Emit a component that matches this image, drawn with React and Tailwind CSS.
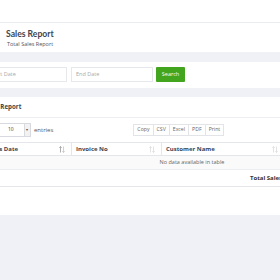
import React from 'react';

const exportButtons = ["Copy", "CSV", "Excel", "PDF", "Print"];

function SortIcon({ active }) {
  return (
    <svg width="6" height="7" viewBox="0 0 6 7" className="shrink-0">
      <path d="M1.5 6.5V0.5M0.3 1.8L1.5 0.5L2.7 1.8" stroke={active ? "#999" : "#dcdcdc"} strokeWidth="0.8" fill="none" />
      <path d="M4.5 0.5V6.5M3.3 5.2L4.5 6.5L5.7 5.2" stroke={active ? "#c4c4c4" : "#dcdcdc"} strokeWidth="0.8" fill="none" />
    </svg>
  );
}

export default function App() {
  return (
    <div className="w-[280px] h-[280px] overflow-hidden bg-[#f0f1f6] font-['Open_Sans',sans-serif] text-[#555]">
      {/* top bar */}
      <div className="h-[23px] bg-white border-b border-[#eaecf1]" />

      {/* page title */}
      <div className="h-[29px] bg-white pl-[6px] pt-[6px]">
        <h1 className="font-['Lato',sans-serif] font-bold text-[8.6px] leading-[11px] text-[#3d4450]">Sales Report</h1>
        <p className="pl-[1px] text-[5.5px] leading-[9px] text-[#555]">Total Sales Report</p>
      </div>

      {/* filters */}
      <div className="mt-[10px] h-[26px] bg-white">
        <div className="flex items-start pt-[5px] ml-[-14px] gap-[4px]">
          <div className="w-[81px] h-[15px] border border-[#e6e8ec] bg-white flex items-center pl-[3px] text-[5.5px] text-[#aaa]">Start Date</div>
          <div className="w-[82px] h-[15px] border border-[#e6e8ec] bg-white flex items-center pl-[4px] text-[5.5px] text-[#aaa]">End Date</div>
          <div className="ml-[-1px] w-[29px] h-[15px] bg-[#43a41e] rounded-[1px] flex items-center justify-center text-[5.5px] text-white">Search</div>
        </div>
      </div>

      {/* report card */}
      <div className="mt-[9px] bg-white h-[118px]">
        <div className="h-[21px] border-b border-[#eceef2] flex items-center ml-[-17px]">
          <span className="font-bold text-[6.2px] text-[#444]">Sales Report</span>
        </div>

        <div className="pt-[5px]">
          <div className="flex items-center h-[14px] ml-[-17px]">
            <span className="text-[5.5px] text-[#555] mr-[2px]">Show</span>
            <div className="w-[32px] h-[14px] border border-[#d8dadf] flex items-center text-[5px] text-[#444]">
              <span className="ml-[8px]">10</span>
              <span className="ml-auto w-[6px] h-full border-l border-[#d8dadf] bg-[#f2f2f2] flex items-center justify-center text-[4px] text-[#555]">▾</span>
            </div>
            <span className="ml-[3px] text-[6px] text-[#555]">entries</span>
            <div className="ml-[80px] flex h-[12px]">
              {exportButtons.map((b) => (
                <div key={b} className="h-[12px] px-[3px] border border-[#e2e4e8] -ml-px first:ml-0 flex items-center text-[5.2px] text-[#666] bg-white">
                  {b}
                </div>
              ))}
            </div>
          </div>

          <div className="mt-[5px] ml-[-24px] w-[440px] text-[6px]">
            <div className="flex h-[14px] border-t border-b border-[#e4e6ea] font-bold text-[#3d4450]">
              <div className="w-[96px] flex items-center justify-between pl-[11px] pr-[6px] border-r border-[#e4e6ea]">
                <span>Sales Date</span>
                <SortIcon active />
              </div>
              <div className="w-[90px] flex items-center justify-between pl-[4px] pr-[6px] border-r border-[#e4e6ea]">
                <span>Invoice No</span>
                <SortIcon />
              </div>
              <div className="w-[123px] flex items-center justify-between pl-[4px] pr-[6px] border-r border-[#e4e6ea]">
                <span>Customer Name</span>
                <SortIcon />
              </div>
              <div className="flex-1" />
            </div>
            <div className="h-[14px] flex items-center justify-center border-b border-[#eceef2] text-[5.5px] text-[#666] bg-[#fafafa] w-[432px]">
              No data available in table
            </div>
            <div className="h-[17px] flex items-center border-b border-[#e4e6ea] font-bold text-[#333]">
              <span className="ml-[274px]">Total Sales:</span>
            </div>
          </div>
        </div>
      </div>
    </div>
  );
}
